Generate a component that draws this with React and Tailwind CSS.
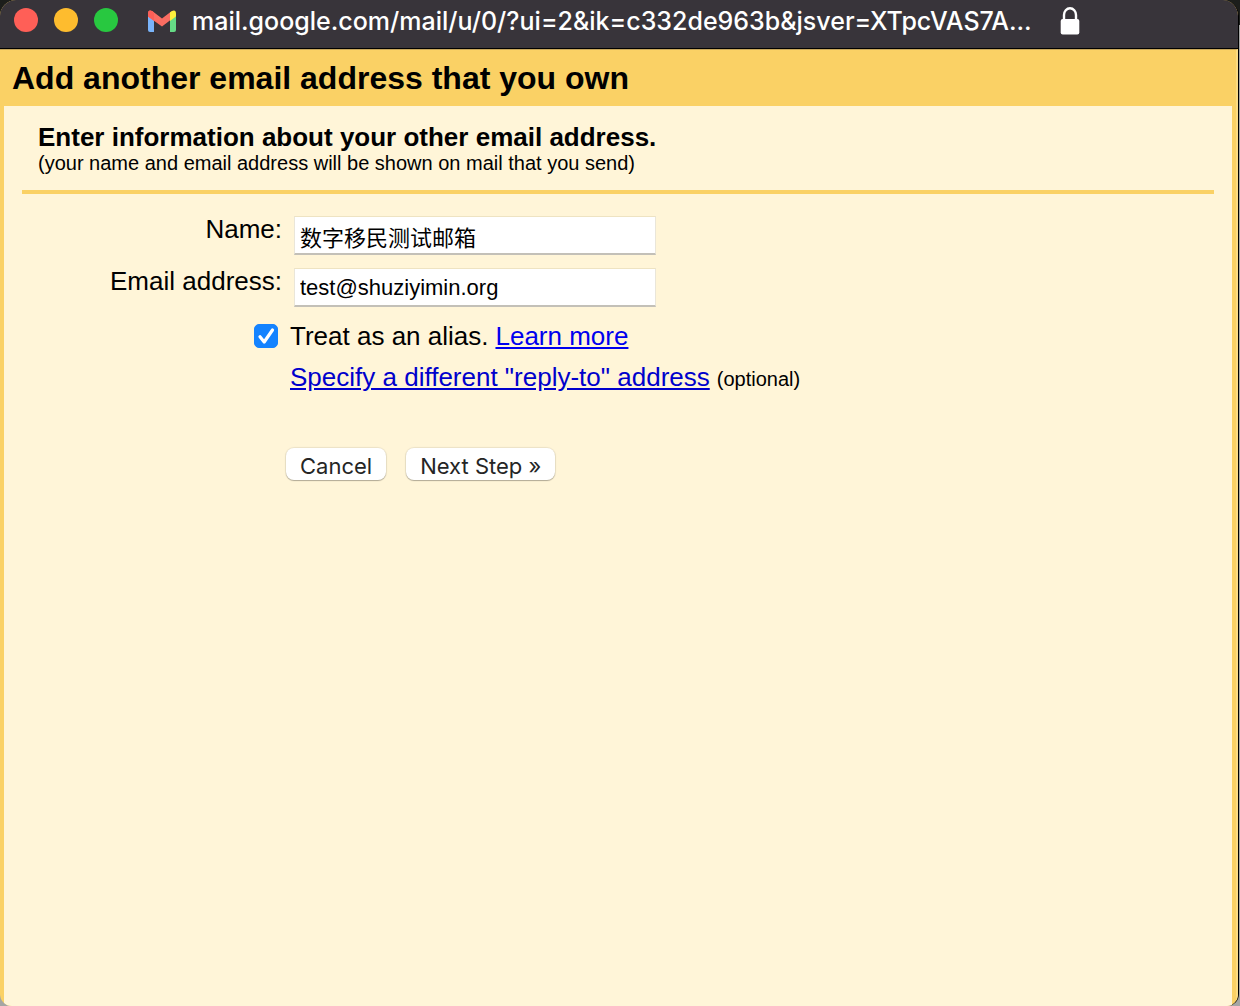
function GmailLogo() {
  return (
    <svg viewBox="0 0 30 22" className="h-[22px] w-[30px] shrink-0" aria-hidden="true">
      <path d="M1 6 7 10V22H3Q1 22 1 20Z" fill="#7ab4fa" />
      <path d="M29 6 23 10V22H27Q29 22 29 20Z" fill="#66da86" />
      <path d="M1 4Q1-1 5.5 1.3L15 8.4 24.5 1.3V9.3L15 16.5 1 6.5Z" fill="#fa6d62" />
      <path d="M1 4Q1-1 5.5 1.3L7 2.5V11L1 6.5Z" fill="#fb5f57" />
      <path d="M23 2.4 24.5 1.3Q29-1 29 4V6.5L23 11Z" fill="#fdf03c" />
    </svg>
  );
}

function LockIcon() {
  return (
    <svg viewBox="0 0 20 28" className="ml-7 h-7 w-5 shrink-0" role="img" aria-label="Secure connection">
      <path d="M4 13V8a6 6.8 0 0 1 12 0v5" fill="none" stroke="#fff" strokeWidth="2.4" />
      <rect x="0.7" y="12" width="18.6" height="15.5" rx="2" fill="#fff" />
    </svg>
  );
}

function Field({ id, label, value, type = "text" }) {
  return (
    <div className="flex items-start gap-3">
      <label htmlFor={id} className="w-[260px] shrink-0 text-right leading-[26px]">
        {label}
      </label>
      <input
        id={id}
        type={type}
        defaultValue={value}
        className="h-[39px] w-[362px] border border-t-[#eee3c2] border-x-[#eae6d9] border-b-2 border-b-[#c3c0b8] bg-white px-[5px] pt-0.5 text-[22px] leading-8 outline-none"
      />
    </div>
  );
}

function PushButton({ children }) {
  return (
    <button
      type="button"
      className="h-8 rounded-lg bg-white px-3.5 pt-1 font-[Inter,sans-serif] text-[22px] leading-7 text-[#252525] shadow-[0_0_1px_1px_#00000014,0_1px_1px_#00000040]"
    >
      {children}
    </button>
  );
}

export default function App() {
  return (
    <div className="min-h-screen bg-[linear-gradient(#1c1e1b_25px,#a5a6a4_25px)] pr-px">
      <div className="flex min-h-screen flex-col overflow-hidden rounded-b-xl rounded-t-2xl border-r border-black bg-[#fad165] font-['Liberation_Sans','Noto_Sans_CJK_SC',sans-serif] text-[26px] leading-[30px] text-black">
        <header className="flex h-[49px] shrink-0 items-center border-b border-black bg-[#38343a] pb-2 pl-3.5">
          <div className="flex gap-4">
            <button type="button" aria-label="Close" className="size-6 rounded-full bg-[#ff5f57]" />
            <button type="button" aria-label="Minimize" className="size-6 rounded-full bg-[#febc2e]" />
            <button type="button" aria-label="Zoom" className="size-6 rounded-full bg-[#28c840]" />
          </div>
          <div className="ml-[29px] flex items-center pt-0.5">
            <GmailLogo />
            <span className="ml-[15px] whitespace-nowrap font-[Inter,sans-serif] text-[25px] font-medium text-white">
              mail.google.com/mail/u/0/?ui=2&amp;ik=c332de963b&amp;jsver=XTpcVAS7A...
            </span>
            <LockIcon />
          </div>
        </header>

        <div className="flex grow flex-col border-r-2 border-t border-r-[#fbdc83] border-t-[#c9a85a] pl-1 pr-1">
          <h1 className="pl-2 text-[32px] font-bold leading-[56px]">Add another email address that you own</h1>

          <main className="grow bg-[#fff5d8] px-[18px] pt-4">
            <div className="border-b-4 border-[#fad165] pb-4 pl-4">
              <h2 className="text-[26px] font-bold leading-[30px]">Enter information about your other email address.</h2>
              <p className="text-[20px] leading-[22px]">(your name and email address will be shown on mail that you send)</p>
            </div>

            <form className="pt-[22px]" onSubmit={(e) => e.preventDefault()}>
              <div className="flex flex-col gap-[13px]">
                <Field id="name" label="Name:" value="数字移民测试邮箱" />
                <Field id="email" label="Email address:" type="email" value="test@shuziyimin.org" />
              </div>

              <div className="mt-3.5 flex items-center pl-[232px]">
                <span className="relative size-6 shrink-0">
                  <input
                    id="alias"
                    type="checkbox"
                    defaultChecked
                    className="peer block size-6 appearance-none rounded-[5px] border border-[#b5b5b5] bg-white checked:border-[#1483ff] checked:bg-[#1483ff]"
                  />
                  <svg viewBox="0 0 24 24" className="pointer-events-none absolute inset-0 hidden size-6 peer-checked:block" aria-hidden="true">
                    <path d="M6 12.8 10.2 18 18.5 6" fill="none" stroke="#fff" strokeWidth="3.2" strokeLinecap="round" strokeLinejoin="round" />
                  </svg>
                </span>
                <label htmlFor="alias" className="ml-3">
                  Treat as an alias.
                </label>
                <a href="#learn-more" className="ml-[7px] text-[#0000ee] underline">
                  Learn more
                </a>
              </div>

              <div className="mt-[11px] flex items-baseline gap-[7px] pl-[268px]">
                <a href="#reply-to" className="text-[#0000cc] underline">
                  Specify a different "reply-to" address
                </a>
                <span className="text-[20px]">(optional)</span>
              </div>

              <div className="mt-[54px] flex gap-5 pl-[264px]">
                <PushButton>Cancel</PushButton>
                <PushButton>Next Step »</PushButton>
              </div>
            </form>
          </main>
        </div>
      </div>
    </div>
  );
}
